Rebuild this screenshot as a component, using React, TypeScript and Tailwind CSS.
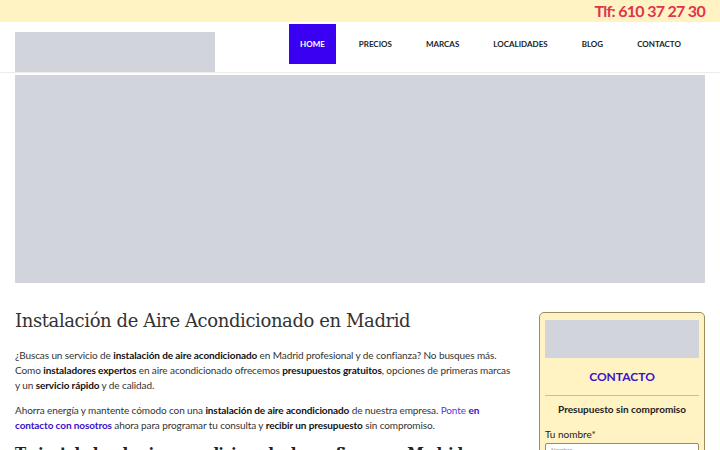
import React from "react";

const navItems = ["HOME", "PRECIOS", "MARCAS", "LOCALIDADES", "BLOG", "CONTACTO"];

function TopBar() {
  return (
    <div className="flex h-[22px] items-center justify-end bg-[#fff2c3] pr-[15px]">
      <span className="text-[16px] font-bold leading-none tracking-[-0.7px] text-[#e0344e]">Tlf: 610 37 27 30</span>
    </div>
  );
}

function Header() {
  return (
    <header className="flex h-[51px] items-start border-b border-[#ececec] bg-white">
      <div className="ml-[15px] mt-[10px] h-[40px] w-[200px] shrink-0 bg-[#d1d5db]" />
      <nav className="ml-[74px] mt-[2px] flex items-center gap-[12px]">
        {navItems.map((item, i) => (
          <a
            key={item}
            className={
              "flex h-[40px] items-center px-[11px] text-[8px] font-bold leading-none " +
              (i === 0 ? "bg-[#3a00f2] text-white" : "text-[#222]")
            }
          >
            {item}
          </a>
        ))}
      </nav>
    </header>
  );
}

function Sidebar() {
  return (
    <aside className="mt-[3px] w-[166px] shrink-0 rounded-[5px] border border-[#9b8c5d] bg-[#fff2c3] px-[5px] pt-[7px] pb-[10px]">
      <div className="h-[38px] bg-[#d1d5db]" />
      <div className="mt-[11px] text-center text-[12px] font-bold leading-[16px] text-[#3a10cc]">CONTACTO</div>
      <div className="mt-[10px] border-t border-[#cbbf97]" />
      <div className="mt-[6px] text-center text-[10px] font-bold leading-[14px] text-[#222]">Presupuesto sin compromiso</div>
      <div className="mt-[11px] text-[10px] leading-[14px] text-[#222]">Tu nombre*</div>
      <div className="mt-[2px] h-[20px] rounded-[2px] border border-[#9b8c5d] bg-white px-[5px] text-[6px] leading-[12px] text-[#999]">
        Nombre
      </div>
    </aside>
  );
}

export default function App() {
  return (
    <div className="h-[450px] w-[720px] overflow-hidden bg-white font-['Lato',sans-serif] text-[#333]">
      <TopBar />
      <Header />
      <div className="mx-[15px] mt-[2px] h-[208px] bg-[#d1d5db]" />
      <div className="mt-[26px] flex gap-[30px] px-[15px]">
        <main className="min-w-0 flex-1">
          <h1 className="font-['DejaVu_Serif',serif] text-[18px] font-normal leading-[24px] tracking-[-0.4px] text-[#333]">
            Instalación de Aire Acondicionado en Madrid
          </h1>
          <p className="mt-[15px] whitespace-nowrap text-[10px] leading-[15px] tracking-[-0.1px] text-[#333]">
            ¿Buscas un servicio de <b className="text-[#111]">instalación de aire acondicionado</b> en Madrid profesional y de confianza? No busques más.
            <br />
            Como <b className="text-[#111]">instaladores expertos</b> en aire acondicionado ofrecemos <b className="text-[#111]">presupuestos gratuitos</b>, opciones de primeras marcas
            <br />
            y un <b className="text-[#111]">servicio rápido</b> y de calidad.
          </p>
          <p className="mt-[10px] whitespace-nowrap text-[10px] leading-[15px] tracking-[-0.1px] text-[#333]">
            Ahorra energía y mantente cómodo con una <b className="text-[#111]">instalación de aire acondicionado</b> de nuestra empresa.{" "}
            <a className="text-[#5b35d5]">Ponte</a> <a className="font-bold text-[#3a10cc]">en</a>
            <br />
            <a className="font-bold text-[#3a10cc]">contacto con nosotros</a> ahora para programar tu consulta y{" "}
            <b className="text-[#111]">recibir un presupuesto</b> sin compromiso.
          </p>
          <h2 className="mt-[9px] font-['DejaVu_Serif',serif] text-[15px] font-bold leading-[22px] tracking-[-1px] text-[#222]">
            Tu instalador de aire acondicionado de confianza en Madrid
          </h2>
        </main>
        <Sidebar />
      </div>
    </div>
  );
}
